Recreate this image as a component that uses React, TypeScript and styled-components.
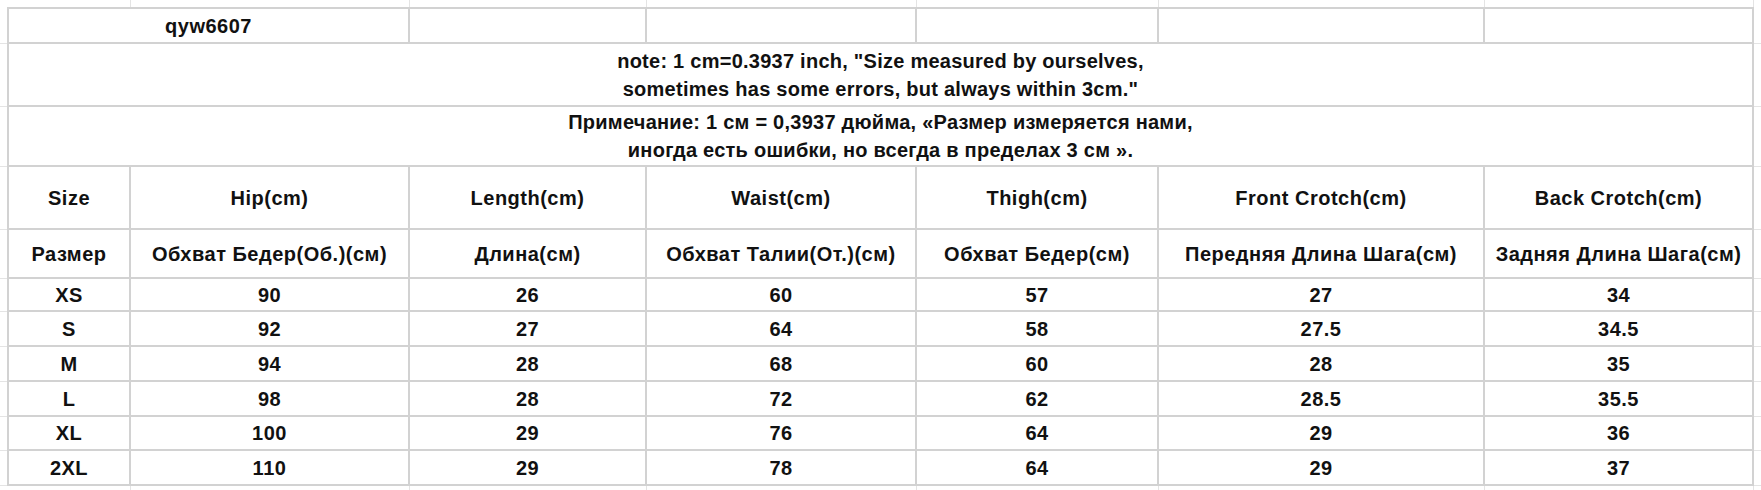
import * as React from 'react';
import styled, { createGlobalStyle } from 'styled-components';

const GlobalStyle = createGlobalStyle`
  html, body {
    margin: 0;
    padding: 0;
    background: #fff;
  }
  body {
    font-family: "Liberation Sans", Arial, "Noto Sans", sans-serif;
    color: #111;
    overflow: hidden;
  }
`;

const LINE = '2px solid #d2d2d2';
const FAINT = '1px solid #e4e4e4';

const Sheet = styled.table`
  width: 1761px;
  table-layout: fixed;
  border-collapse: collapse;
  border-spacing: 0;
  font-size: 20px;
  font-weight: bold;
  letter-spacing: 0.5px;
`;

const Row = styled.tr<{ $h: number }>`
  height: ${p => p.$h}px;
`;

const Cell = styled.td<{ $wrap?: boolean }>`
  border: ${LINE};
  padding: 0;
  text-align: center;
  vertical-align: middle;
  white-space: ${p => (p.$wrap ? 'normal' : 'nowrap')};
  line-height: ${p => (p.$wrap ? '28px' : '22px')};
  letter-spacing: ${p => (p.$wrap ? '0.25px' : 'inherit')};
  overflow: visible;
`;

const Gutter = styled.td<{ $edge: 'left' | 'right' | 'top' | 'bottom' | 'corner' }>`
  padding: 0;
  border: none;
  ${p => (p.$edge === 'left' || p.$edge === 'right') && `border-bottom: ${FAINT};`}
  ${p => (p.$edge === 'top' || p.$edge === 'bottom') && `border-right: ${FAINT};`}
`;

const cols = [8, 122, 279, 237, 270, 242, 326, 269, 8];

const headEn = ['Size', 'Hip(cm)', 'Length(cm)', 'Waist(cm)', 'Thigh(cm)', 'Front Crotch(cm)', 'Back Crotch(cm)'];
const headRu = [
  'Размер',
  'Обхват Бедер(Об.)(см)',
  'Длина(см)',
  'Обхват Талии(От.)(см)',
  'Обхват Бедер(см)',
  'Передняя Длина Шага(см)',
  'Задняя Длина Шага(см)',
];

const rows = [
  { h: 33, v: ['XS', 90, 26, 60, 57, 27, 34] },
  { h: 35, v: ['S', 92, 27, 64, 58, 27.5, 34.5] },
  { h: 35, v: ['M', 94, 28, 68, 60, 28, 35] },
  { h: 35, v: ['L', 98, 28, 72, 62, 28.5, 35.5] },
  { h: 34, v: ['XL', 100, 29, 76, 64, 29, 36] },
  { h: 35, v: ['2XL', 110, 29, 78, 64, 29, 37] },
];

const App = () => {
  return (
    <>
      <GlobalStyle />
      <Sheet>
        <colgroup>
          {cols.map((w, i) => (
            <col key={i} style={{ width: w }} />
          ))}
        </colgroup>
        <tbody>
          <Row $h={8}>
            <Gutter $edge="corner" />
            {headEn.map((_, i) => (
              <Gutter key={i} $edge="top" />
            ))}
            <Gutter $edge="corner" />
          </Row>
          <Row $h={35}>
            <Gutter $edge="left" />
            <Cell colSpan={2}>qyw6607</Cell>
            <Cell />
            <Cell />
            <Cell />
            <Cell />
            <Cell />
            <Gutter $edge="right" />
          </Row>
          <Row $h={63}>
            <Gutter $edge="left" />
            <Cell colSpan={7} $wrap>
              note: 1 cm=0.3937 inch, "Size measured by ourselves,
              <br />
              sometimes has some errors, but always within 3cm."
            </Cell>
            <Gutter $edge="right" />
          </Row>
          <Row $h={60}>
            <Gutter $edge="left" />
            <Cell colSpan={7} $wrap>
              Примечание: 1 см = 0,3937 дюйма, «Размер измеряется нами,
              <br />
              иногда есть ошибки, но всегда в пределах 3 см ».
            </Cell>
            <Gutter $edge="right" />
          </Row>
          <Row $h={63}>
            <Gutter $edge="left" />
            {headEn.map(t => (
              <Cell key={t}>{t}</Cell>
            ))}
            <Gutter $edge="right" />
          </Row>
          <Row $h={49}>
            <Gutter $edge="left" />
            {headRu.map(t => (
              <Cell key={t}>{t}</Cell>
            ))}
            <Gutter $edge="right" />
          </Row>
          {rows.map(r => (
            <Row key={r.v[0]} $h={r.h}>
              <Gutter $edge="left" />
              {r.v.map((x, i) => (
                <Cell key={i}>{x}</Cell>
              ))}
              <Gutter $edge="right" />
            </Row>
          ))}
          <Row $h={10}>
            <Gutter $edge="corner" />
            {headEn.map((_, i) => (
              <Gutter key={i} $edge="bottom" />
            ))}
            <Gutter $edge="corner" />
          </Row>
        </tbody>
      </Sheet>
    </>
  );
};

export default App;
